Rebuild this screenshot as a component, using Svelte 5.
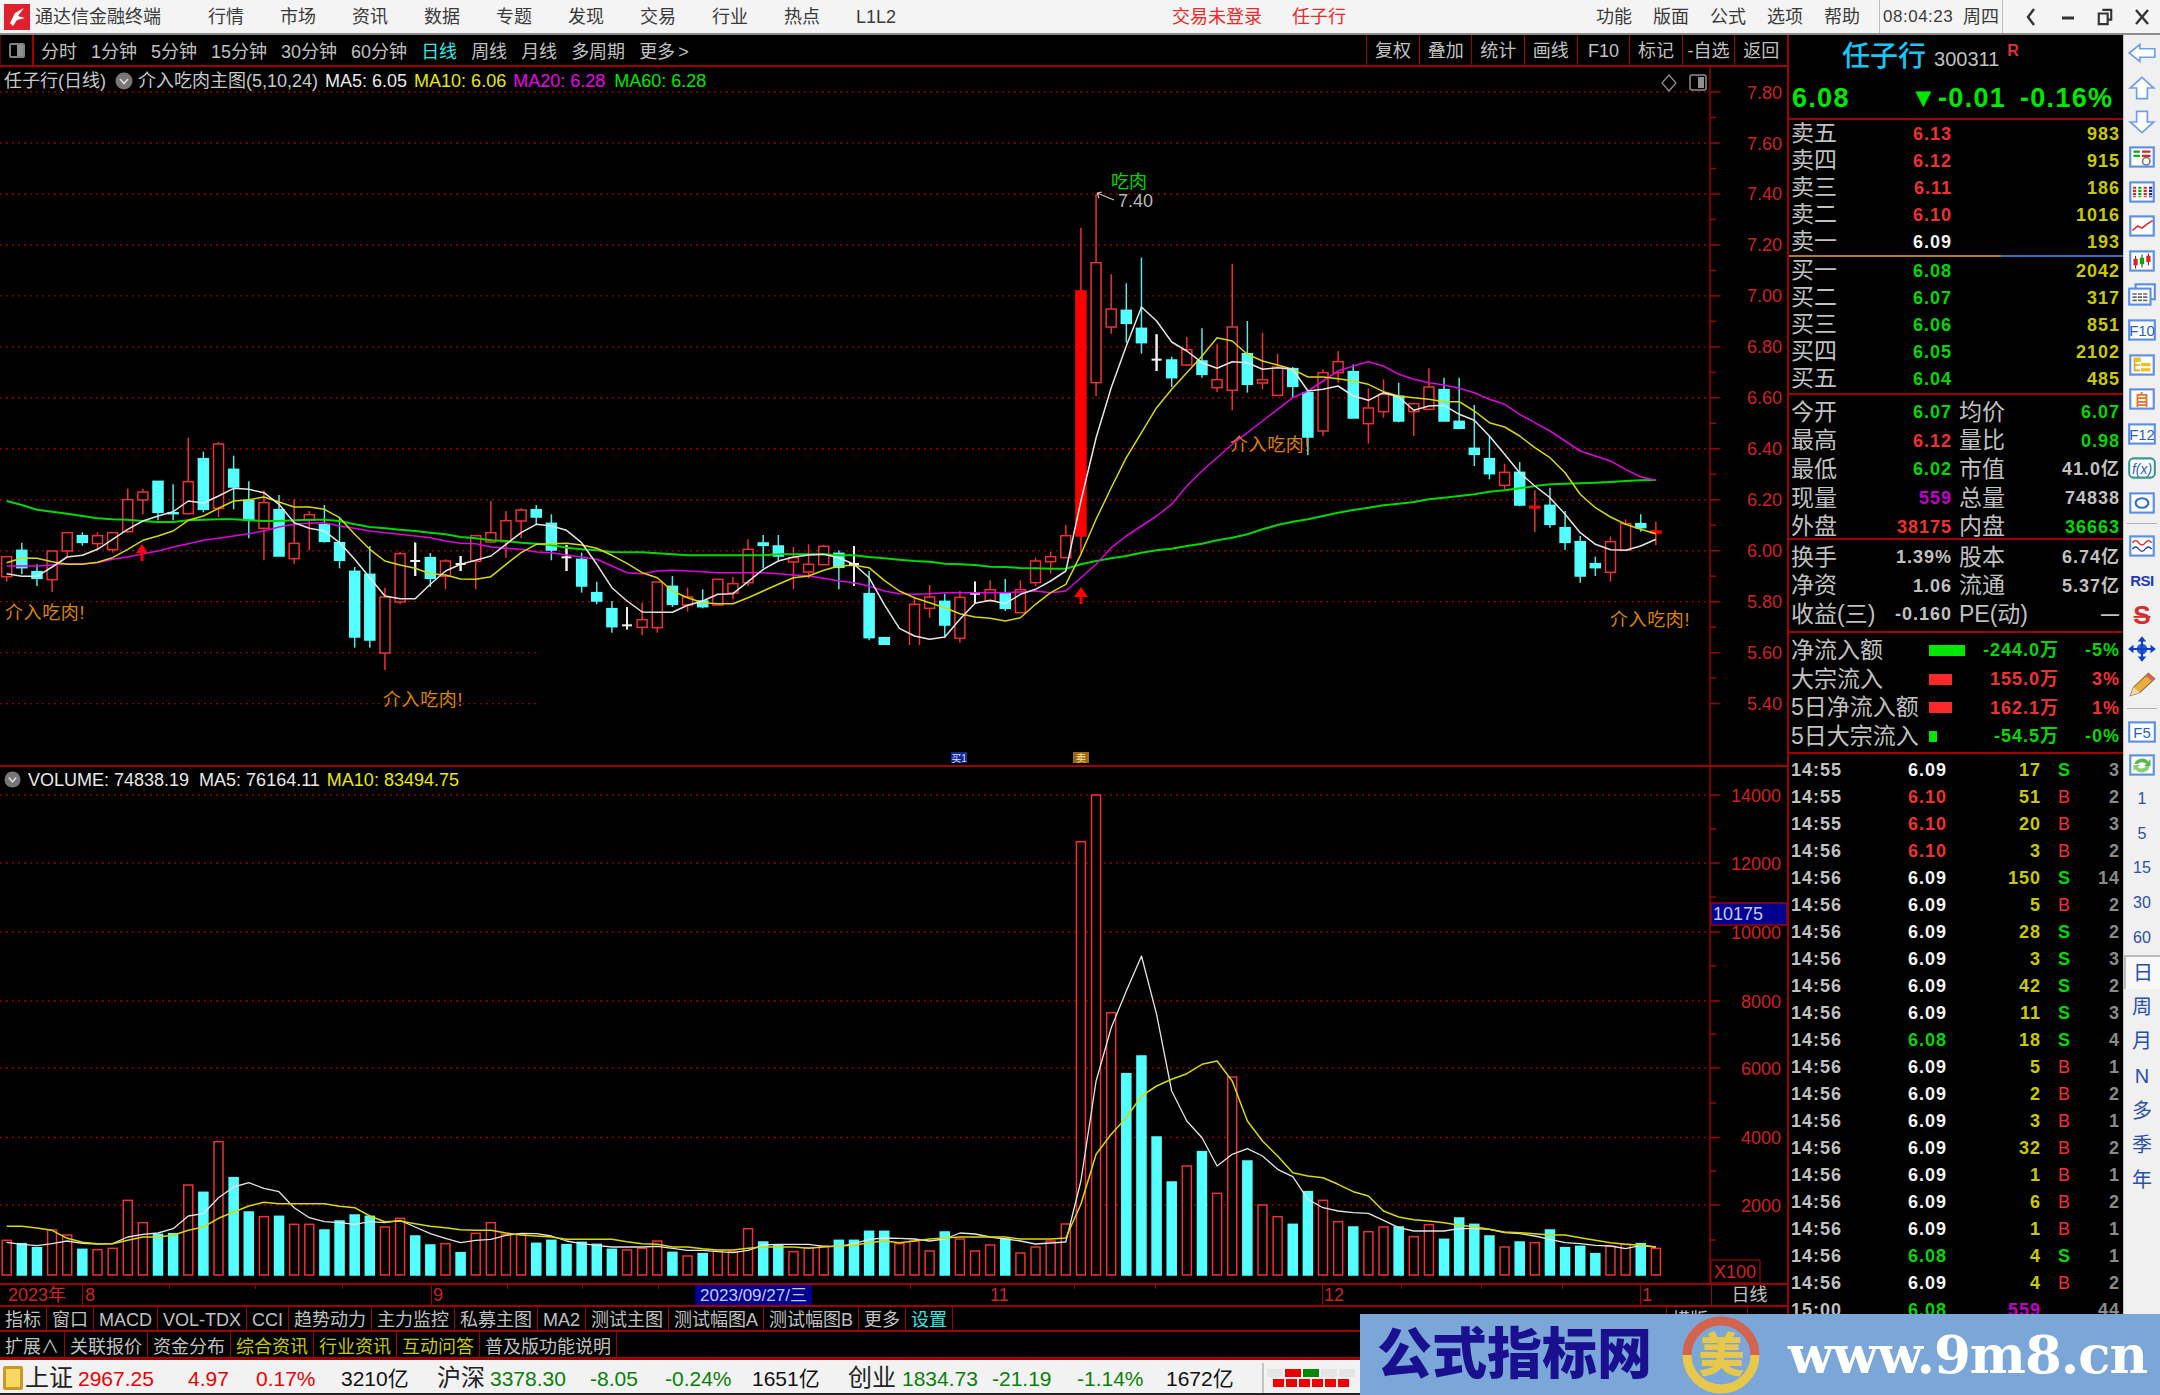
<script>
	const X = (i) => 6.7 + i * 15.13;
	const py = (i, v) => (i <= 70 ? v / 3 + 420 : v / 3 + 160);
	const vy = (i, v) => (i <= 70 ? v / 3 + 1100 : v / 3 + 780);

	// hi, body top, body bottom, lo, type
	const candles = [
		[407, 407, 467, 482, "r"], [365, 388, 440, 460, "c"], [430, 452, 472, 495, "c"], [390, 390, 476, 513, "r"],
		[335, 335, 390, 410, "r"], [334, 344, 364, 374, "c"], [334, 344, 368, 384, "r"], [335, 335, 386, 395, "r"],
		[203, 236, 332, 335, "r"], [203, 213, 237, 280, "r"], [181, 181, 274, 298, "c"], [190, 275, 278, 298, "c"],
		[50, 182, 278, 280, "r"], [92, 113, 265, 274, "c"], [63, 69, 262, 288, "r"], [104, 145, 198, 265, "c"],
		[181, 238, 298, 352, "c"], [208, 245, 322, 418, "r"], [222, 266, 405, 405, "c"], [235, 367, 413, 428, "r"],
		[270, 281, 298, 388, "r"], [252, 311, 361, 365, "c"], [290, 365, 418, 442, "c"], [438, 451, 648, 680, "c"],
		[375, 460, 657, 680, "c"], [500, 528, 696, 747, "r"], [392, 398, 543, 550, "r"], [365, 420, 422, 465, "w"],
		[396, 410, 472, 498, "c"], [415, 420, 466, 505, "r"], [405, 429, 431, 450, "w"], [344, 344, 421, 505, "r"],
		[240, 335, 363, 365, "r"], [270, 299, 362, 410, "r"], [262, 267, 300, 352, "r"], [252, 266, 288, 312, "c"],
		[280, 307, 387, 418, "c"], [372, 409, 411, 450, "w"], [395, 415, 495, 515, "c"], [482, 515, 540, 550, "c"],
		[540, 563, 617, 635, "c"],
		[558, 613, 615, 625, "w"], [545, 596, 619, 643, "r"], [483, 483, 620, 635, "r"], [465, 496, 550, 558, "c"],
		[500, 528, 552, 572, "r"], [505, 540, 557, 562, "c"], [475, 475, 552, 552, "r"], [468, 488, 516, 535, "r"],
		[355, 385, 485, 495, "r"], [342, 366, 373, 442, "c"], [342, 375, 405, 418, "c"], [378, 410, 423, 505, "r"],
		[370, 430, 453, 472, "r"], [372, 376, 431, 431, "r"], [388, 397, 439, 505, "c"], [375, 429, 431, 495, "w"],
		[450, 518, 650, 658, "c"], [650, 650, 810, 810, "c"], [700, 700, 800, 800, "c"], [530, 550, 700, 700, "r"],
		[492, 528, 562, 590, "r"], [518, 541, 612, 650, "c"], [510, 529, 652, 665, "r"], [482, 518, 520, 548, "w"],
		[478, 506, 540, 540, "r"], [474, 518, 562, 570, "c"], [478, 506, 575, 575, "r"], [410, 420, 485, 495, "r"],
		[392, 407, 422, 458, "r"], [312, 344, 410, 410, "r"],
		[200, 390, 1125, 1180, "R"], [100, 305, 665, 705, "r"], [340, 444, 498, 518, "r"], [367, 448, 487, 545, "c"],
		[290, 502, 545, 578, "c"], [520, 596, 598, 630, "w"], [587, 597, 650, 678, "c"], [528, 566, 612, 615, "r"],
		[502, 600, 640, 650, "c"], [550, 656, 680, 693, "r"], [308, 498, 688, 748, "r"], [480, 578, 670, 695, "c"],
		[515, 656, 666, 685, "r"], [578, 618, 703, 703, "r"], [618, 623, 676, 708, "c"], [695, 695, 828, 883, "c"],
		[625, 635, 810, 825, "r"], [570, 602, 635, 665, "r"], [610, 632, 771, 771, "c"], [682, 741, 788, 848, "r"],
		[655, 700, 752, 770, "r"], [665, 706, 780, 784, "c"], [725, 728, 752, 825, "r"], [622, 678, 745, 748, "r"],
		[650, 686, 780, 780, "c"], [650, 781, 802, 802, "c"], [732, 862, 880, 915, "c"], [825, 893, 938, 955, "c"],
		[908, 934, 973, 985, "r"], [903, 934, 1032, 1036, "c"], [988, 1036, 1041, 1113, "R"], [980, 1033, 1090, 1100, "c"],
		[1050, 1100, 1144, 1167, "c"], [1125, 1142, 1245, 1265, "c"], [1187, 1208, 1220, 1245, "c"], [1127, 1142, 1234, 1262, "r"],
		[1075, 1088, 1168, 1168, "r"], [1060, 1088, 1100, 1112, "c"], [1082, 1110, 1116, 1153, "R"]
	];

	const ma5 = [458, 466, 466, 438, 408, 403, 385, 355, 325, 300, 285, 272, 240, 246, 225, 202, 205, 215, 250, 305, 322, 330, 365, 415, 470, 525, 533, 533, 490, 450, 430, 418, 405, 370, 335, 310, 315, 328, 365, 430, 500,
		540, 573, 574, 574, 553, 540, 520, 518, 482, 445, 420, 408, 402, 400, 410, 430, 470, 550, 622, 645, 655, 648, 595, 547, 538, 548, 520, 505, 480, 450,
		1020, 830, 680, 555, 438, 480, 543, 570, 605, 622, 602, 605, 625, 620, 625, 690, 685, 675, 705, 718, 695, 708, 748, 735, 733, 760, 778, 825, 880, 935, 975, 1010, 1060, 1115, 1150, 1166, 1168, 1155, 1135];
	const ma10 = [425, 411, 412, 422, 430, 430, 424, 410, 385, 358, 345, 330, 298, 285, 262, 240, 236, 228, 243, 258, 258, 265, 290, 340, 385, 420, 432, 442, 458, 462, 474, 475, 467, 430, 395, 370, 368, 367, 372, 382, 403,
		427, 455, 470, 510, 530, 545, 548, 548, 530, 510, 490, 470, 465, 448, 435, 433, 440, 478, 510, 530, 545, 560, 578, 588, 592, 600, 590, 550, 515, 490,
		1180, 1075, 980, 890, 815, 740, 685, 635, 585, 530, 540, 580, 600, 612, 625, 648, 648, 653, 660, 670, 692, 705, 710, 715, 722, 722, 750, 785, 798, 825, 860, 890, 935, 1000, 1040, 1068, 1090, 1105, 1118];
	const ma20 = [435, 435, 435, 432, 428, 428, 425, 415, 408, 398, 390, 378, 368, 358, 352, 345, 338, 330, 318, 310, 307, 305, 315, 322, 330, 335, 340, 345, 350, 360, 367, 368, 378, 382, 385, 393, 395, 402, 408, 415, 435,
		455, 458, 450, 448, 450, 452, 455, 455, 455, 455, 458, 462, 465, 472, 480, 485, 495, 510, 518, 520, 518, 515, 515, 515, 515, 515, 513, 510, 515, 510,
		1250, 1210, 1160, 1125, 1095, 1065, 1030, 975, 930, 890, 850, 815, 780, 745, 710, 690, 660, 630, 615, 602, 615, 640, 655, 665, 672, 682, 695, 715, 730, 760, 785, 810, 840, 870, 885, 900, 925, 948, 958];
	const ma60 = [240, 252, 266, 272, 278, 285, 292, 295, 296, 300, 303, 303, 298, 296, 295, 295, 298, 300, 300, 298, 296, 296, 300, 310, 318, 322, 326, 330, 335, 340, 348, 352, 358, 360, 365, 368, 372, 380, 385, 388, 393,
		394, 394, 397, 400, 403, 403, 403, 403, 403, 403, 400, 400, 400, 400, 403, 403, 408, 412, 416, 420, 422, 428, 430, 432, 437, 438, 441, 442, 443, 443,
		1210, 1200, 1192, 1185, 1175, 1168, 1163, 1155, 1148, 1138, 1130, 1120, 1105, 1092, 1082, 1075, 1065, 1055, 1047, 1040, 1033, 1028, 1023, 1015, 1010, 1005, 1000, 992, 988, 982, 975, 970, 968, 967, 965, 963, 960, 958, 957];

	const volTypes = "rccrrcrrrr" + "ccrcrccrcr" + "rccccrrccr" + "crrrrccccc" + "crrrcrcrrr" + "ccrrrccccr" + "rrcrrrcrrr" + "rrrrccccrc" + "rrcrrccrrc" + "rrcrrccccr" + "crccccrrcr";
	const vols = [418, 428, 440, 387, 402, 445, 446, 442, 298, 365, 400, 398, 252, 274, 122, 230, 333, 347, 346, 370, 370, 387, 360, 342, 346, 378, 352, 405, 432, 428, 455, 397, 365, 400, 400, 427, 418, 431, 424, 430, 445, 447, 442, 420, 454, 465, 458, 450, 452, 383, 423, 432, 452, 440, 435, 418, 418, 391, 391, 428,
		420, 450, 393, 414, 450, 432, 414, 456, 438, 420, 369,
		182, 42, 695, 878, 825, 1068, 1203, 1155, 1112, 1237, 888, 1140, 1272, 1307, 1330, 1232, 1258, 1322, 1338, 1352, 1338, 1338, 1367, 1331, 1375, 1311, 1330, 1365, 1398, 1383, 1385, 1347, 1400, 1396, 1418, 1396, 1390, 1388, 1402];
	const vma5 = [424, 430, 434, 428, 420, 427, 429, 428, 408, 400, 396, 383, 345, 338, 290, 258, 245, 262, 272, 320, 350, 362, 365, 370, 362, 365, 358, 378, 398, 412, 425, 418, 415, 403, 397, 398, 405, 420, 428, 433, 438, 438, 438, 436, 442, 448, 448, 452, 455, 448, 432, 430, 430, 430, 436, 436, 428, 415, 411, 412,
		414, 420, 414, 396, 399, 408, 414, 420, 429, 426, 423,
		1200, 900, 740, 630, 525, 700, 930, 1020, 1070, 1155, 1120, 1103, 1125, 1165, 1187, 1255, 1280, 1290, 1295, 1297, 1318, 1340, 1350, 1350, 1350, 1343, 1343, 1345, 1355, 1358, 1365, 1375, 1385, 1388, 1393, 1395, 1403, 1393, 1398];
	const vma10 = [376, 376, 381, 388, 412, 424, 428, 428, 418, 408, 408, 403, 388, 378, 352, 333, 315, 304, 308, 308, 308, 308, 316, 320, 345, 362, 360, 368, 376, 380, 386, 388, 388, 396, 402, 405, 408, 415, 415, 415, 415, 422, 428, 430, 438, 438, 443, 447, 447, 442, 438, 438, 438, 442, 438, 435, 433, 425, 420, 425,
		420, 414, 411, 408, 408, 408, 408, 414, 414, 414, 411,
		1270, 1120, 1060, 1010, 945, 915, 895, 878, 850, 840, 900, 1020, 1080, 1125, 1175, 1185, 1190, 1210, 1232, 1245, 1290, 1308, 1316, 1320, 1325, 1333, 1337, 1345, 1353, 1355, 1358, 1362, 1362, 1370, 1378, 1385, 1390, 1393, 1398];

	const line = (arr, f) => arr.map((v, i) => X(i).toFixed(1) + "," + f(i, v).toFixed(1)).join(" ");

	const priceY = (p) => 549.7 - (p - 6) * 254.8;
	const priceLabels = [7.8, 7.6, 7.4, 7.2, 7, 6.8, 6.6, 6.4, 6.2, 6, 5.8, 5.6, 5.4];
	const priceMinor = [7.7, 7.5, 7.3, 7.1, 6.9, 6.7, 6.5, 6.3, 6.1, 5.9, 5.7, 5.5];
	const volLabels = [[14000, 794], [12000, 862], [10000, 931], [8000, 1000], [6000, 1067], [4000, 1136.5], [2000, 1204]];

	const mainTabs = ["分时", "1分钟", "5分钟", "15分钟", "30分钟", "60分钟", "日线", "周线", "月线", "多周期", "更多"];
	const toolBtns = ["复权", "叠加", "统计", "画线", "F10", "标记", "-自选", "返回"];
	const menus = ["行情", "市场", "资讯", "数据", "专题", "发现", "交易", "行业", "热点", "L1L2"];
	const rightMenus = ["功能", "版面", "公式", "选项", "帮助"];

	const sells = [["卖五", "6.13", "983", "up"], ["卖四", "6.12", "915", "up"], ["卖三", "6.11", "186", "up"], ["卖二", "6.10", "1016", "up"], ["卖一", "6.09", "193", "white"]];
	const buys = [["买一", "6.08", "2042"], ["买二", "6.07", "317"], ["买三", "6.06", "851"], ["买四", "6.05", "2102"], ["买五", "6.04", "485"]];
	const stats = [
		["今开", "6.07", "down", "均价", "6.07", "down"],
		["最高", "6.12", "up", "量比", "0.98", "down"],
		["最低", "6.02", "down", "市值", "41.0亿", "gray"],
		["现量", "559", "purple", "总量", "74838", "gray"],
		["外盘", "38175", "up", "内盘", "36663", "down"]
	];
	const stats2 = [
		["换手", "1.39%", "股本", "6.74亿"],
		["净资", "1.06", "流通", "5.37亿"],
		["收益(三)", "-0.160", "PE(动)", "—"]
	];
	const flows = [
		["净流入额", 36, "down", "-244.0万", "-5%"],
		["大宗流入", 23, "up", "155.0万", "3%"],
		["5日净流入额", 23, "up", "162.1万", "1%"],
		["5日大宗流入", 8, "down", "-54.5万", "-0%"]
	];
	const ticks = [
		["14:55", "6.09", "white", "17", "S", "3"], ["14:55", "6.10", "up", "51", "B", "2"], ["14:55", "6.10", "up", "20", "B", "3"],
		["14:56", "6.10", "up", "3", "B", "2"], ["14:56", "6.09", "white", "150", "S", "14"], ["14:56", "6.09", "white", "5", "B", "2"],
		["14:56", "6.09", "white", "28", "S", "2"], ["14:56", "6.09", "white", "3", "S", "3"], ["14:56", "6.09", "white", "42", "S", "2"],
		["14:56", "6.09", "white", "11", "S", "3"], ["14:56", "6.08", "down", "18", "S", "4"], ["14:56", "6.09", "white", "5", "B", "1"],
		["14:56", "6.09", "white", "2", "B", "2"], ["14:56", "6.09", "white", "3", "B", "1"], ["14:56", "6.09", "white", "32", "B", "2"],
		["14:56", "6.09", "white", "1", "B", "1"], ["14:56", "6.09", "white", "6", "B", "2"], ["14:56", "6.09", "white", "1", "B", "1"],
		["14:56", "6.08", "down", "4", "S", "1"], ["14:56", "6.09", "white", "4", "B", "2"], ["15:00", "6.08", "down", "559", "", "44"]
	];

	const indexTabs = [["指标"], ["窗口"], ["MACD"], ["VOL-TDX"], ["CCI"], ["趋势动力"], ["主力监控"], ["私募主图"], ["MA2"], ["测试主图"], ["测试幅图A"], ["测试幅图B"], ["更多"], ["设置", "cyan"]];
	const extTabs = [["扩展∧"], ["关联报价"], ["资金分布"], ["综合资讯", "yel"], ["行业资讯", "yel"], ["互动问答", "yel"], ["普及版功能说明"]];
	const dateTicks = [169, 255, 342, 507, 582, 658, 910, 1074, 1155, 1401, 1481, 1562];
	const dateSeps = [82, 431, 1322, 1640];
	const periods = ["1", "5", "15", "30", "60"];
	const periods2 = ["周", "月", "N", "多", "季", "年"];
</script>

<div class="app">
	<header class="titlebar">
		<svg class="logo" viewBox="0 0 26 26">
			<rect width="26" height="26" fill="#e0202c" />
			<path d="M20 4 L11 9 L6 19 L9 22 L13 16 L21 14 L14 12 Z" fill="#fff" />
		</svg>
		<span class="appname">通达信金融终端</span>
		<nav class="menus">
			{#each menus as m}<span>{m}</span>{/each}
		</nav>
		<span class="alert">交易未登录</span>
		<span class="alert second">任子行</span>
		<nav class="menus right">
			{#each rightMenus as m}<span>{m}</span>{/each}
		</nav>
		<div class="clock"><span>08:04:23</span><span>周四</span></div>
		<div class="winbtns">
			<svg viewBox="0 0 16 20"><path d="M11 2 L5 10 L11 18" fill="none" stroke="#333" stroke-width="2.4" /></svg>
			<svg viewBox="0 0 16 20"><path d="M2 11 H14" stroke="#333" stroke-width="3" /></svg>
			<svg viewBox="0 0 18 20"><path d="M6 2 H16 V13 H13 M2 6 H12 V18 H2 Z" fill="none" stroke="#333" stroke-width="2.4" /></svg>
			<svg viewBox="0 0 16 20"><path d="M2 3 L14 17 M14 3 L2 17" stroke="#333" stroke-width="2.4" /></svg>
		</div>
	</header>

	<div class="workspace">
		<main class="left">
			<div class="toolbar">
				<div class="panetoggle"><i></i></div>
				<div class="periods">
					{#each mainTabs as t}
						<span class:active={t === "日线"}>{t}{#if t === "更多"}<em>&gt;</em>{/if}</span>
					{/each}
				</div>
				<div class="toolbtns">
					{#each toolBtns as b}<span>{b}</span>{/each}
				</div>
			</div>

			<section class="pane price">
				<div class="legend">
					<span>任子行(日线)</span>
					<svg class="chev" viewBox="0 0 18 18"><circle cx="9" cy="9" r="8.5" fill="#777" /><path d="M5 7 L9 11.5 L13 7" fill="none" stroke="#ddd" stroke-width="1.6" /></svg>
					<span class="fm">介入吃肉主图(5,10,24)</span>
					<span class="l5">MA5: 6.05</span>
					<span class="l10">MA10: 6.06</span>
					<span class="l20">MA20: 6.28</span>
					<span class="l60">MA60: 6.28</span>
				</div>
				<svg viewBox="0 66 1787 698" width="1787" height="698">
					{#each priceLabels as p}
						<line class="grid" x1="0" x2="1710" y1={priceY(p)} y2={priceY(p)} />
						<line class="axis" x1="1710" x2="1720" y1={priceY(p)} y2={priceY(p)} />
						<text class="axtext" x="1782" y={priceY(p) + 6.5} text-anchor="end">{p.toFixed(2)}</text>
					{/each}
					{#each priceMinor as p}
						<line class="axis" x1="1710" x2="1716" y1={priceY(p)} y2={priceY(p)} />
					{/each}

					{#each candles as c, i}
						{@const x = X(i)}
						{@const t = c[4]}
						<line class="wick {t}" x1={x} x2={x} y1={py(i, c[0])} y2={py(i, c[1])} />
						<line class="wick {t}" x1={x} x2={x} y1={py(i, c[2])} y2={py(i, c[3])} />
						{#if t === "w"}
							<line class="wick w" x1={x - 5} x2={x + 5} y1={py(i, c[1])} y2={py(i, c[1])} />
							<line class="wick w" x1={x} x2={x} y1={py(i, c[0])} y2={py(i, c[3])} />
						{:else}
							<rect class="body {t}" x={x - 5} width="10" y={py(i, c[1])} height={py(i, c[2]) - py(i, c[1])} />
						{/if}
					{/each}

					<polyline class="ma m60" points={line(ma60, py)} />
					<polyline class="ma m20" points={line(ma20, py)} />
					<polyline class="ma m10" points={line(ma10, py)} />
					<polyline class="ma m5" points={line(ma5, py)} />

					<!-- the reference has a patch painted over this part of the chart -->
					<rect x="538" y="644" width="1172" height="100" fill="#000" />

					<path class="redarrow" d="M142 543 L148 552 L143.5 552 V560 H140.5 V552 L136 552 Z" />
					<path class="redarrow" d="M1081 586 L1088 596 L1082.5 596 V603 H1079.5 V596 L1074 596 Z" />

					<text class="tip" x="5" y="618">介入吃肉!</text>
					<text class="tip" x="383" y="705">介入吃肉!</text>
					<text class="tip" x="1230" y="450">介入吃肉!</text>
					<text class="tip" x="1610" y="625">介入吃肉!</text>
					<text class="eat" x="1111" y="187">吃肉</text>
					<path d="M1097 192 L1114 199 M1097 192 L1102 191 M1097 192 L1099 197" fill="none" stroke="#c8c8c8" stroke-width="1.2" />
					<text class="high" x="1118" y="206">7.40</text>

					<rect x="951" y="751" width="16" height="11" fill="#14288c" />
					<text class="flag" x="959" y="761" text-anchor="middle" fill="#d8d8ff">买1</text>
					<rect x="1073" y="751" width="16" height="11" fill="#a06a10" />
					<text class="flag" x="1081" y="761" text-anchor="middle" fill="#ffe0a0">卖</text>

					<path d="M1669 74 L1676 82 L1669 90 L1662 82 Z" fill="none" stroke="#909090" stroke-width="1.2" />
					<rect x="1690" y="74" width="16" height="15" rx="2" fill="#000" stroke="#909090" stroke-width="1.5" />
					<rect x="1698" y="76" width="6" height="11" fill="#909090" />

					<line class="axis" x1="1710" x2="1710" y1="66" y2="764" />
				</svg>
			</section>

			<section class="pane vol">
				<div class="legend vlegend">
					<svg class="chev" viewBox="0 0 18 18"><circle cx="9" cy="9" r="8.5" fill="#777" /><path d="M5 7 L9 11.5 L13 7" fill="none" stroke="#ddd" stroke-width="1.6" /></svg>
					<span class="l5">VOLUME: 74838.19&nbsp; MA5: 76164.11</span>
					<span class="l10">MA10: 83494.75</span>
				</div>
				<svg viewBox="0 764 1787 518" width="1787" height="518">
					{#each volLabels as v}
						<line class="grid" x1="0" x2="1710" y1={v[1]} y2={v[1]} />
						<line class="axis" x1="1710" x2="1720" y1={v[1]} y2={v[1]} />
						<text class="axtext" x="1781" y={v[1] + 6.5} text-anchor="end">{v[0]}</text>
					{/each}
					{#each [828, 896, 965, 1033, 1102, 1170, 1239] as y}
						<line class="axis" x1="1710" x2="1716" y1={y} y2={y} />
					{/each}

					{#each vols as v, i}
						{@const t = volTypes[i]}
						<rect class="body {t}" x={X(i) - 4.5} width="9" y={vy(i, v)} height={1274 - vy(i, v)} />
					{/each}

					<polyline class="ma m5 thin" points={line(vma5, vy)} />
					<polyline class="ma m10" points={line(vma10, vy)} />

					<line class="axis" x1="1710" x2="1710" y1="764" y2="1282" />
					<rect x="1711" y="902" width="76" height="22" fill="#000090" stroke="#a00000" stroke-width="1.5" />
					<text class="cross" x="1713" y="919">10175</text>
					<rect x="1711" y="1259" width="49" height="23" fill="#000" stroke="#a00000" stroke-width="1.2" />
					<text class="axtext" x="1714" y="1277">X100</text>
				</svg>
			</section>

			<div class="dateaxis">
				{#each dateTicks as x}<i class="tick" style="left: {x}px"></i>{/each}
				{#each dateSeps as x}<i class="sep" style="left: {x}px"></i>{/each}
				<span class="year">2023年</span>
				<span class="m" style="left: 85px">8</span>
				<span class="m" style="left: 433px">9</span>
				<span class="m" style="left: 990px">11</span>
				<span class="m" style="left: 1324px">12</span>
				<span class="m" style="left: 1642px">1</span>
				<span class="cursor">2023/09/27/三</span>
				<span class="period">日线</span>
			</div>

			<div class="tabs">
				{#each indexTabs as t}<span class={t[1]}>{t[0]}</span>{/each}
				<span class="far">横版</span>
			</div>
			<div class="tabs second">
				{#each extTabs as t}<span class={t[1]}>{t[0]}</span>{/each}
			</div>
		</main>

		<aside class="panel">
			<div class="head">
				<div class="name"><b>任子行</b><span>300311</span><sup>R</sup></div>
				<div class="quote"><span>6.08</span><span>▼-0.01</span><span>-0.16%</span></div>
			</div>

			<div class="book sells">
				{#each sells as r}
					<div class="row">
						<span class="lab">{r[0]}</span>
						<span class="num {r[3]}">{r[1]}</span>
						<span class="num yel">{r[2]}</span>
					</div>
				{/each}
			</div>
			<div class="split"><i></i><i></i></div>
			<div class="book buys">
				{#each buys as r}
					<div class="row">
						<span class="lab">{r[0]}</span>
						<span class="num down">{r[1]}</span>
						<span class="num yel">{r[2]}</span>
					</div>
				{/each}
			</div>

			<div class="stats">
				{#each stats as r}
					<div class="srow">
						<span class="lab">{r[0]}</span>
						<span class="num {r[2]}">{r[1]}</span>
						<span class="lab">{r[3]}</span>
						<span class="num {r[5]}">{r[4]}</span>
					</div>
				{/each}
			</div>

			<div class="stats compact">
				{#each stats2 as r}
					<div class="srow">
						<span class="lab">{r[0]}</span>
						<span class="num gray">{r[1]}</span>
						<span class="lab">{r[2]}</span>
						<span class="num gray">{r[3]}</span>
					</div>
				{/each}
			</div>

			<div class="flows">
				{#each flows as r}
					<div class="frow">
						<span class="lab">{r[0]}</span>
						<div class="fval">
							<i class="fbar {r[2]}" style="width: {r[1]}px"></i>
							<span class="num {r[2]}">{r[3]}</span>
						</div>
						<span class="num {r[2]}">{r[4]}</span>
					</div>
				{/each}
			</div>

			<div class="ticks">
				{#each ticks as r}
					<div class="trow">
						<span class="num gray left">{r[0]}</span>
						<span class="num {r[2]}">{r[1]}</span>
						<span class="num {r[4] ? 'yel' : 'purple'}">{r[3]}</span>
						<span class="side {r[4]}">{r[4]}</span>
						<span class="num dim">{r[5]}</span>
					</div>
				{/each}
			</div>
		</aside>

		<nav class="strip">
			<div class="ico"><svg viewBox="0 0 30 22"><path class="arr" d="M3 11 L13 3 V7 H27 V15 H13 V19 Z" /></svg></div>
			<div class="ico"><svg viewBox="0 0 30 24"><path class="arr" d="M15 2 L26 12 H20 V22 H10 V12 H4 Z" /></svg></div>
			<div class="ico"><svg viewBox="0 0 30 24"><path class="arr" d="M15 22 L26 12 H20 V2 H10 V12 H4 Z" /></svg></div>
			<div class="ico"><svg viewBox="0 0 30 26">
				<rect class="box" x="4" y="4" width="22" height="18" />
				<path d="M7 8 H13 M7 12 H13" stroke="#0a0" stroke-width="2" /><path d="M15 8 H23 M15 12 H23" stroke="#d22" stroke-width="2" />
				<circle cx="19" cy="17" r="3.5" fill="none" stroke="#777" stroke-width="1.5" />
			</svg></div>
			<div class="ico"><svg viewBox="0 0 30 26">
				<rect class="box" x="4" y="4" width="22" height="18" />
				<path d="M8 8 V18" stroke="#d22" stroke-width="3" stroke-dasharray="2 1" /><path d="M13 8 V18" stroke="#0a0" stroke-width="3" stroke-dasharray="2 1" />
				<path d="M18 8 V18" stroke="#d22" stroke-width="3" stroke-dasharray="2 1" /><path d="M23 8 V18" stroke="#22a" stroke-width="3" stroke-dasharray="2 1" />
			</svg></div>
			<div class="ico"><svg viewBox="0 0 30 26">
				<rect class="box" x="4" y="4" width="22" height="18" />
				<path d="M6 17 L11 13 L15 15 L20 11 L25 8" fill="none" stroke="#e22" stroke-width="1.5" />
			</svg></div>
			<div class="ico"><svg viewBox="0 0 30 26">
				<rect class="box" x="4" y="4" width="22" height="18" />
				<path d="M9 8 V20 M15 7 V19 M21 6 V17" stroke="#333" stroke-width="1" />
				<rect x="7" y="11" width="4" height="6" fill="#d22" /><rect x="13" y="10" width="4" height="6" fill="#0a0" /><rect x="19" y="8" width="4" height="6" fill="#d22" />
			</svg></div>
			<div class="ico"><svg viewBox="0 0 30 26">
				<rect class="box" x="9" y="3" width="18" height="14" />
				<rect class="box" x="3" y="7" width="20" height="15" />
				<path d="M6 12 H20 M6 15 H20 M6 18 H20" stroke="#666" stroke-width="1.5" stroke-dasharray="4 1" />
			</svg></div>
			<div class="ico"><svg viewBox="0 0 30 26"><rect class="box" x="3" y="4" width="24" height="18" /><text class="itx" x="15" y="19" text-anchor="middle">F10</text></svg></div>
			<div class="ico"><svg viewBox="0 0 30 26">
				<rect class="box" x="4" y="4" width="22" height="18" />
				<path d="M8 8 V18 H13 M8 13 H13" fill="none" stroke="#e0a020" stroke-width="1.5" />
				<rect x="7" y="6" width="7" height="4" fill="#f0c020" /><rect x="14" y="11" width="9" height="3" fill="#f0c020" /><rect x="14" y="16" width="9" height="3" fill="#f0c020" />
			</svg></div>
			<div class="ico"><svg viewBox="0 0 30 26"><rect class="box" x="4" y="4" width="22" height="18" /><text class="itx org" x="15" y="19" text-anchor="middle">自</text></svg></div>
			<div class="ico"><svg viewBox="0 0 30 26"><rect class="box" x="3" y="4" width="24" height="18" /><text class="itx" x="15" y="19" text-anchor="middle">F12</text></svg></div>
			<div class="ico"><svg viewBox="0 0 30 26"><rect class="box tealb" x="3" y="4" width="24" height="18" rx="4" /><text class="itx small" x="15" y="19" text-anchor="middle">f(x)</text></svg></div>
			<div class="ico"><svg viewBox="0 0 30 26"><rect class="box" x="4" y="4" width="22" height="18" /><ellipse cx="15" cy="13" rx="6" ry="4.5" fill="none" stroke="#2a70d0" stroke-width="2" /></svg></div>
			<hr class="first" />
			<div class="ico"><svg viewBox="0 0 30 26">
				<rect class="box" x="4" y="4" width="22" height="18" />
				<path d="M6 10 Q9 6 12 10 T18 10 T24 10" fill="none" stroke="#e02020" stroke-width="1.3" />
				<path d="M6 16 Q9 12 12 16 T18 16 T24 16" fill="none" stroke="#2040d0" stroke-width="1.3" />
			</svg></div>
			<div class="ico rsi"><span>RSI</span></div>
			<div class="ico"><svg viewBox="0 0 30 30">
				<text class="dollar" x="15" y="25" text-anchor="middle">S</text>
				<path d="M6 17 H24" stroke="#d03030" stroke-width="2" />
			</svg></div>
			<div class="ico"><svg viewBox="0 0 30 26">
				<path d="M15 1 L19 6 H11 Z M15 25 L19 20 H11 Z M2 13 L7 9 V17 Z M28 13 L23 9 V17 Z" fill="#1040c0" />
				<circle cx="15" cy="13" r="5" fill="#2060d8" /><path d="M6 13 H24 M15 5 V21" stroke="#1040c0" stroke-width="2" />
			</svg></div>
			<div class="ico"><svg viewBox="0 0 30 26">
				<path d="M4 24 L7 16 L21 3 L27 8 L13 21 Z" fill="#e8b040" stroke="#8a6a30" stroke-width="1" />
				<path d="M4 24 L7 16 L13 21 Z" fill="#f0d8b0" /><path d="M21 3 L27 8 L24.5 10.5 L18.5 5.5 Z" fill="#d86060" />
			</svg></div>
			<hr class="last" />
			<div class="ico tight"><svg viewBox="0 0 30 26"><rect class="box" x="3" y="4" width="24" height="18" /><text class="itx" x="15" y="19" text-anchor="middle">F5</text></svg></div>
			<div class="ico"><svg viewBox="0 0 30 26">
				<rect class="box" x="4" y="4" width="22" height="18" />
				<path d="M8 12 A7 6 0 0 1 21 10 L23 7 V14 H17 L19 12 A5 4 0 0 0 11 12 Z" fill="#58b848" />
				<path d="M22 14 A7 6 0 0 1 9 17 L7 19 V13 H13 L11 15 A5 4 0 0 0 19 14 Z" fill="#88d070" />
			</svg></div>
			{#each periods as p}<div class="ico num">{p}</div>{/each}
			<div class="ico cjk selected">日</div>
			{#each periods2 as p}<div class="ico cjk">{p}</div>{/each}
		</nav>
	</div>

	<footer class="status">
		<i class="folder"></i>
		<span class="lab">上证</span><span class="up">2967.25</span><span class="up">4.97</span><span class="up">0.17%</span><span>3210亿</span>
		<span class="lab">沪深</span><span class="down">3378.30</span><span class="down">-8.05</span><span class="down">-0.24%</span><span>1651亿</span>
		<span class="lab">创业</span><span class="down">1834.73</span><span class="down">-21.19</span><span class="down">-1.14%</span><span>1672亿</span>
		<div class="breadth">
			<div class="toprow"><i></i><i class="red"></i><i class="green"></i><i></i><i></i></div>
			<div class="lowrow">{#each Array(6) as _}<i></i>{/each}</div>
		</div>
	</footer>

	<div class="watermark">
		<span class="wm-cn">公式指标网</span>
		<svg class="wm-logo" viewBox="0 0 84 84">
			<path d="M8 42 A34 34 0 0 1 76 42" fill="none" stroke="#d4634e" stroke-width="9" />
			<path d="M76 42 A34 34 0 0 1 8 42" fill="none" stroke="#e8c84a" stroke-width="9" />
			<text x="42" y="58" text-anchor="middle">美</text>
		</svg>
		<span class="wm-url">www.9m8.cn</span>
	</div>
</div>

<style>
	:global(body) {
		margin: 0;
		background: #000;
	}

	.app {
		position: relative;
		width: 2160px;
		height: 1395px;
		overflow: hidden;
		display: flex;
		flex-direction: column;
		background: #000;
		color: #c0c0c0;
		font-family: "Liberation Sans", "Noto Sans CJK SC", sans-serif;
		font-size: 18px;
		line-height: 1;
		white-space: nowrap;
	}

	/* title bar */
	.titlebar {
		height: 35px;
		box-sizing: border-box;
		flex: none;
		display: flex;
		align-items: center;
		background: #f4f4f4;
		border-bottom: 2px solid #8c8c8c;
		color: #3a3a3a;
	}
	.logo {
		width: 26px;
		height: 26px;
		margin-left: 4px;
	}
	.appname {
		margin-left: 5px;
		width: 173px;
	}
	.menus {
		display: flex;
		gap: 36px;
	}
	.alert {
		margin-left: 276px;
		color: #f02828;
		width: 95px;
	}
	.alert.second {
		margin-left: 25px;
		width: 55px;
	}
	.menus.right {
		gap: 21px;
		margin-left: 249px;
	}
	.clock {
		display: flex;
		justify-content: space-between;
		align-items: center;
		width: 124px;
		height: 33px;
		box-sizing: border-box;
		margin-left: 19px;
		padding: 0 3px;
		border: solid #bcbcbc;
		border-width: 0 1px;
		font-size: 17px;
		letter-spacing: 0.5px;
	}
	.clock span + span {
		font-size: 18px;
		letter-spacing: 0;
	}
	.winbtns {
		display: flex;
		align-items: center;
		gap: 21px;
		margin-left: 20px;
	}
	.winbtns svg {
		width: 16px;
		height: 20px;
	}

	.workspace {
		display: flex;
		flex: none;
		height: 1323px;
	}
	.left {
		width: 1787px;
		flex: none;
		display: flex;
		flex-direction: column;
	}

	/* period bar */
	.toolbar {
		height: 32px;
		box-sizing: border-box;
		flex: none;
		display: flex;
		align-items: stretch;
		border-bottom: 2px solid #a00000;
	}
	.panetoggle {
		width: 34px;
		box-sizing: border-box;
		border-right: 2px solid #a00000;
		border-left: 1px solid #600000;
		display: flex;
		align-items: center;
		justify-content: center;
	}
	.panetoggle i {
		width: 16px;
		height: 15px;
		box-sizing: border-box;
		border: 2px solid #808080;
		border-radius: 2px;
		background: linear-gradient(to right, #000 50%, #909090 50%);
	}
	.periods {
		display: flex;
		align-items: center;
		gap: 14px;
		margin-left: 7px;
		padding-top: 3px;
	}
	.periods span.active {
		color: #30e8e8;
	}
	.periods em {
		font-style: normal;
		margin-left: 3px;
	}
	.toolbtns {
		display: flex;
		margin-left: auto;
	}
	.toolbtns span {
		width: 52.6px;
		box-sizing: border-box;
		border-left: 1px solid #a00000;
		display: flex;
		align-items: center;
		justify-content: center;
		padding-top: 2px;
	}

	/* chart panes */
	.pane {
		position: relative;
		flex: none;
	}
	.pane svg {
		display: block;
	}
	.pane.price {
		height: 698px;
	}
	.pane.vol {
		height: 518px;
	}
	.legend {
		position: absolute;
		left: 4px;
		top: 4px;
		height: 20px;
		display: flex;
		align-items: center;
		gap: 7px;
		font-size: 18px;
		color: #c8c8c8;
	}
	.vlegend {
		top: 3px;
		gap: 7px;
	}
	.fm {
		margin-left: -2px;
	}
	.chev {
		width: 18px;
		height: 18px;
		flex: none;
		margin-left: 2px;
	}
	.vlegend .chev {
		width: 17px;
		height: 17px;
		margin-left: 0;
	}
	.l5 {
		color: #e8e8e8;
	}
	.l10 {
		color: #e8e800;
	}
	.l20 {
		color: #f000f0;
	}
	.l60 {
		color: #00e800;
		margin-left: 2px;
	}
	.vol {
		border-top: 2px solid #a00000;
		box-sizing: border-box;
	}
	.vol svg {
		margin-top: -2px;
	}

	.grid {
		stroke: #900000;
		stroke-width: 1.4;
		stroke-dasharray: 2 4;
	}
	.axis {
		stroke: #a00000;
		stroke-width: 1.5;
	}
	.axtext {
		fill: #d02020;
		font-size: 18px;
	}
	.cross {
		fill: #c8c8ff;
		font-size: 18px;
	}
	.wick {
		stroke-width: 1.5;
	}
	.wick.r,
	.wick.R {
		stroke: #f03030;
	}
	.wick.c {
		stroke: #54e8e8;
	}
	.wick.w {
		stroke: #f0f0f0;
		stroke-width: 2;
	}
	.body {
		stroke-width: 1.5;
	}
	.body.r {
		fill: #000;
		stroke: #f03030;
	}
	.body.R {
		fill: #ff0000;
		stroke: #ff0000;
	}
	.body.c {
		fill: #54ffff;
		stroke: #54ffff;
	}
	.ma {
		fill: none;
		stroke-width: 1.5;
		stroke-linejoin: round;
	}
	.m5 {
		stroke: #e4e4e4;
	}
	.m10 {
		stroke: #d8d800;
	}
	.m20 {
		stroke: #e000e0;
	}
	.m60 {
		stroke: #00d800;
		stroke-width: 2;
	}
	.ma.thin {
		stroke-width: 1.3;
	}
	.redarrow {
		fill: #ff0000;
	}
	.tip {
		fill: #dc8400;
		font-size: 18px;
		letter-spacing: 0.6px;
	}
	.eat {
		fill: #00d800;
		font-size: 18px;
	}
	.high {
		fill: #b8b8b8;
		font-size: 18px;
	}
	.flag {
		font-size: 10px;
	}

	/* date axis */
	.dateaxis {
		position: relative;
		height: 24px;
		flex: none;
		box-sizing: border-box;
		border-top: 2px solid #a00000;
		border-bottom: 2px solid #a00000;
		color: #d02020;
		display: flex;
		align-items: center;
	}
	.dateaxis .tick {
		position: absolute;
		top: 0;
		width: 1px;
		height: 4px;
		background: #a00000;
	}
	.dateaxis .sep {
		position: absolute;
		top: 0;
		bottom: 0;
		width: 1px;
		background: #a00000;
	}
	.year {
		margin-left: 8px;
	}
	.dateaxis .m {
		position: absolute;
	}
	.cursor {
		position: absolute;
		left: 695px;
		width: 117px;
		top: 0;
		bottom: 0;
		display: flex;
		align-items: center;
		justify-content: center;
		background: #000090;
		color: #c8c8ff;
		font-size: 17px;
	}
	.period {
		position: absolute;
		left: 1711px;
		right: 0;
		top: 0;
		bottom: 0;
		display: flex;
		align-items: center;
		justify-content: center;
		border-left: 1px solid #a00000;
		color: #c0c0c0;
	}

	/* bottom tabs */
	.tabs {
		height: 25px;
		flex: none;
		box-sizing: border-box;
		display: flex;
		align-items: stretch;
		border-bottom: 2px solid #a00000;
	}
	.tabs.second {
		height: 27px;
	}
	.tabs span {
		display: flex;
		align-items: center;
		padding: 2px 5px 0;
		border-right: 1px solid #a00000;
		color: #c0c0c0;
	}
	.tabs.second span {
		padding-top: 4px;
	}
	.tabs span.cyan {
		color: #30e8e8;
	}
	.tabs span.yel {
		color: #c8c800;
	}
	.tabs span.far {
		margin-left: auto;
		width: 82px;
		box-sizing: border-box;
		border-left: 1px solid #a00000;
		margin-right: 39px;
	}

	/* quote panel */
	.panel {
		width: 336px;
		flex: none;
		box-sizing: border-box;
		border-left: 2px solid #a00000;
		overflow: hidden;
		font-size: 18px;
	}
	.head {
		height: 85px;
		box-sizing: border-box;
		border-bottom: 2px solid #a00000;
	}
	.name {
		display: flex;
		align-items: baseline;
		height: 42px;
		padding: 8px 0 0 53px;
		box-sizing: border-box;
		font-size: 20px;
	}
	.name b {
		font-size: 28px;
		font-weight: 500;
		color: #10c8ff;
		margin-right: 8px;
	}
	.name sup {
		color: #e03030;
		font-size: 16px;
		font-weight: 700;
		margin: 0 0 0 8px;
		align-self: flex-start;
	}
	.quote {
		display: flex;
		color: #00e800;
		font-weight: 700;
		font-size: 27px;
		padding: 8px 4px 0 3px;
		letter-spacing: 1.3px;
	}
	.quote span:nth-child(1) {
		width: 118px;
	}
	.quote span:nth-child(2) {
		width: 110px;
	}

	.lab {
		font-size: 23px;
		color: #c0c0c0;
	}
	.num {
		font-weight: 700;
		font-size: 18px;
		letter-spacing: 1px;
		text-align: right;
		margin-right: -1px;
	}
	.num.left {
		text-align: left;
	}
	.up {
		color: #f03030;
	}
	.down {
		color: #00d800;
	}
	.white {
		color: #f4f4f4;
	}
	.yel {
		color: #c8c800;
	}
	.gray {
		color: #c0c0c0;
	}
	.dim {
		color: #8a8a8a;
	}
	.purple {
		color: #c000c8;
	}

	.book {
		padding-left: 2px;
		padding-right: 4px;
	}
	.book.buys {
		height: 138px;
		box-sizing: border-box;
		border-bottom: 2px solid #a00000;
	}
	.row {
		display: grid;
		grid-template-columns: 70px 90px 1fr;
		height: 27px;
		align-items: center;
	}
	.split {
		display: flex;
		height: 2px;
	}
	.split i:first-child {
		width: 212px;
		background: #b07820;
	}
	.split i:last-child {
		flex: 1;
		background: #2c70b8;
	}

	.stats {
		height: 145px;
		box-sizing: border-box;
		padding: 3px 4px 0 2px;
		border-bottom: 2px solid #a00000;
	}
	.stats.compact {
		height: 93px;
	}
	.srow {
		display: grid;
		grid-template-columns: 70px 90px 8px 60px 1fr;
		height: 28.6px;
		align-items: center;
	}
	.srow .lab:nth-child(3) {
		grid-column: 4;
	}

	.flows {
		height: 121px;
		box-sizing: border-box;
		padding: 3px 4px 0 2px;
		border-bottom: 2px solid #a00000;
	}
	.frow {
		display: grid;
		grid-template-columns: 138px 129px 1fr;
		height: 28.7px;
		align-items: center;
	}
	.fval {
		display: flex;
		align-items: center;
		justify-content: space-between;
	}
	.fbar {
		height: 11px;
	}
	.fbar.up {
		background: #ff2828;
	}
	.fbar.down {
		background: #00e800;
	}

	.ticks {
		padding: 2px 4px 0 2px;
	}
	.trow {
		display: grid;
		grid-template-columns: 60px 95px 94px 48px 1fr;
		height: 27px;
		align-items: center;
	}
	.side {
		text-align: center;
		font-size: 18px;
		font-weight: 400;
	}
	.side.B {
		color: #f03030;
	}
	.side.S {
		color: #00d800;
		font-weight: 700;
	}

	/* icon strip */
	.strip {
		flex: 1;
		display: flex;
		flex-direction: column;
		background: #f0f0f0;
		padding-top: 1px;
		color: #2a4fa8;
		border-left: 1px solid #c8c8c8;
	}
	.ico {
		height: 34.6px;
		flex: none;
		display: flex;
		align-items: center;
		justify-content: center;
	}
	.ico.tight {
		height: 31px;
	}
	.ico svg {
		width: 32px;
		height: 28px;
	}
	.ico.num {
		font-size: 16px;
		font-weight: 400;
		letter-spacing: 0;
		margin: 0;
		color: #2a4fa8;
		text-align: center;
	}
	.ico.cjk {
		font-size: 20px;
	}
	.ico.selected {
		background: #f8f8f8;
		border: solid #bbb;
		border-width: 2px 0 0 2px;
		box-sizing: border-box;
	}
	.ico.rsi span {
		font-weight: 700;
		font-size: 15px;
		color: #2838b0;
		letter-spacing: -0.5px;
	}
	.strip hr {
		flex: none;
		width: 30px;
		height: 1px;
		border: 0;
		background: #b0b0b0;
	}
	.strip hr.first {
		margin: 3px auto 4px;
	}
	.strip hr.last {
		margin: 7px auto 7px;
	}
	.arr {
		fill: #fff;
		stroke: #6ea0e8;
		stroke-width: 1.6;
	}
	.box {
		fill: #fff;
		stroke: #5a8ee8;
		stroke-width: 2;
	}
	.box.tealb {
		stroke: #3a9a90;
	}
	.itx {
		fill: #2a60c0;
		font-size: 14px;
	}
	.itx.org {
		fill: #e87830;
		font-weight: 700;
	}
	.itx.small {
		font-style: italic;
		font-size: 13px;
	}
	.dollar {
		fill: #d03030;
		font-size: 28px;
		font-weight: 700;
	}

	/* status bar */
	.status {
		flex: 1;
		display: grid;
		grid-template-columns: 3px 22px 53px 110px 68px 85px 96px 53px 100px 75px 87px 96px 54px 90px 85px 89px 96px 1fr;
		align-items: center;
		background: #f2f2f2;
		border-bottom: 2px solid #222;
		border-top: 2px solid #a00000;
		color: #111;
		font-size: 21px;
		padding-top: 3px;
		box-sizing: border-box;
	}
	.status .folder {
		grid-column: 2;
		width: 20px;
		height: 24px;
		box-sizing: border-box;
		border: 3px solid #c89828;
		background: #f8d860;
		border-radius: 2px;
	}
	.status .lab {
		font-size: 24px;
		color: #222;
	}
	.status .up {
		color: #f00000;
	}
	.status .down {
		color: #088008;
	}
	.breadth {
		border-left: 2px solid #c4c4c4;
		height: 30px;
		padding-left: 3px;
		display: flex;
		flex-direction: column;
		gap: 2px;
		justify-content: center;
	}
	.toprow,
	.lowrow {
		display: flex;
		gap: 2px;
	}
	.toprow i {
		width: 16px;
		height: 8px;
		background: #e4e4e4;
	}
	.toprow i.red {
		background: #e80000;
	}
	.toprow i.green {
		background: #008800;
	}
	.lowrow {
		margin-left: 6px;
	}
	.lowrow i {
		width: 11px;
		height: 8px;
		background: #f00000;
	}

	/* watermark overlay */
	.watermark {
		position: absolute;
		left: 1360px;
		top: 1314px;
		width: 800px;
		height: 81px;
		background: #7ba7d8;
		display: flex;
		align-items: center;
		overflow: hidden;
	}
	.wm-cn {
		margin-left: 17px;
		width: 284px;
		font-size: 55px;
		font-weight: 900;
		color: #1a0f8f;
	}
	.wm-logo {
		width: 84px;
		height: 84px;
		margin-left: 18px;
	}
	.wm-logo text {
		fill: #e8c84a;
		font-size: 46px;
		font-weight: 900;
	}
	.wm-url {
		margin-left: 25px;
		font-family: "DejaVu Serif", serif;
		font-weight: 700;
		font-size: 53px;
		letter-spacing: -1px;
		color: #fff;
	}
</style>
